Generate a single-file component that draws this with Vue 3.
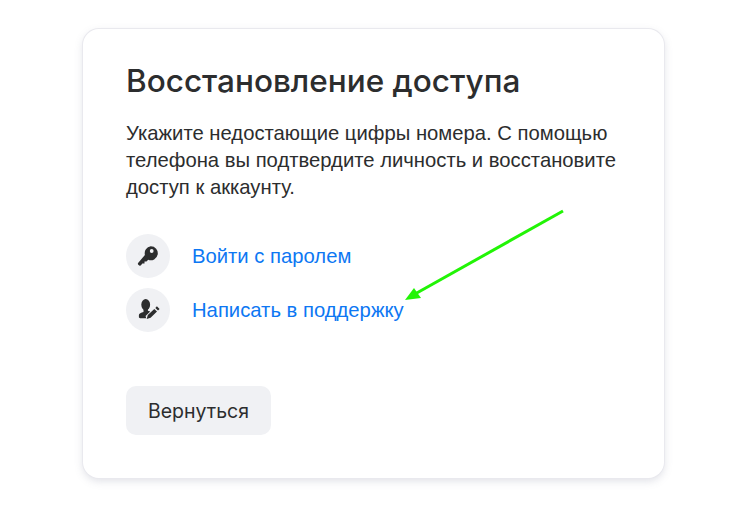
<template>
  <div class="page">
    <div class="card">
      <h1 class="title">Восстановление доступа</h1>
      <p class="text">
        Укажите недостающие цифры номера. С помощью<br>
        телефона вы подтвердите личность и восстановите<br>
        доступ к аккаунту.
      </p>
      <div class="options">
        <a class="option">
          <span class="icon">
            <svg width="24" height="24" viewBox="0 0 24 24">
              <path fill="#2c2d2e" fill-rule="evenodd" d="M14.700 2.300a7 7 0 1 1-2.500 13.500l-1.700 1.700h-2v2h-2.200l-1.300 1.800c-.4.500-1.100.600-1.700.2l-1-.8c-.5-.4-.6-1.100-.2-1.600l6.800-8.200a7 7 0 0 1 5.800-8.600zm1 2.800a1.900 1.900 0 1 0 0 3.800 1.900 1.900 0 0 0 0-3.800z"/>
            </svg>
          </span>
          <span class="link">Войти с паролем</span>
        </a>
        <a class="option">
          <span class="icon">
            <svg width="24" height="24" viewBox="0 0 24 24">
              <ellipse fill="#2c2d2e" cx="9.700" cy="6.800" rx="4.400" ry="5.700"/>
              <path fill="#2c2d2e" d="M7.500 11h4.400v1.800l2.300.7-4.600 4.600.6 2.200H4.200c-.8 0-1.300-.5-1.300-1.200v-2c0-1.600 2.300-2.500 4.600-3.100z"/>
              <path fill="#2c2d2e" d="M20.900 8.300l2.700 2.700-1.600 1.600-2.700-2.700zM18.300 10.900l2.700 2.700-6.400 6.200-3.900 1.100 1.100-3.800z"/>
            </svg>
          </span>
          <span class="link">Написать в поддержку</span>
        </a>
      </div>
      <button class="back">Вернуться</button>
    </div>
    <svg class="arrow" width="734" height="508" viewBox="0 0 734 508">
      <line x1="563" y1="211" x2="415" y2="294" stroke="#22f406" stroke-width="3"/>
      <polygon fill="#22f406" points="405,300 414,288 421,298"/>
    </svg>
  </div>
</template>

<script setup>
</script>

<style>
html, body {
  margin: 0;
  background: #fff;
}
</style>

<style scoped>
.page {
  position: relative;
  width: 734px;
  height: 508px;
  padding: 29px 0 0 83px;
  box-sizing: border-box;
  overflow: hidden;
  font-family: "Liberation Sans", Arial, sans-serif;
}

.card {
  width: 581px;
  height: 449px;
  box-sizing: border-box;
  padding: 34px 43px;
  background: #fff;
  border-radius: 16px;
  box-shadow: 0 0 0 1px #e9e9ee, 0 3px 8px rgba(110, 115, 140, 0.22);
}

.title {
  margin: 0;
  font-family: Inter, "Noto Sans", sans-serif;
  font-size: 31.5px;
  line-height: 36px;
  font-weight: 500;
  color: #2c2d2e;
}

.text {
  margin: 21px 0 0;
  font-size: 20.25px;
  line-height: 27px;
  color: #2c2d2e;
}

.options {
  margin-top: 33px;
  display: flex;
  flex-direction: column;
  gap: 10px;
}

.option {
  display: flex;
  align-items: center;
  gap: 22px;
}

.icon {
  width: 44px;
  height: 44px;
  border-radius: 50%;
  background: #f0f1f4;
  display: flex;
  align-items: center;
  justify-content: center;
}

.link {
  font-size: 20.25px;
  color: #0d77f3;
}

.back {
  display: block;
  margin-top: 54px;
  width: 145px;
  height: 49px;
  border: none;
  border-radius: 10px;
  background: #f0f1f4;
  font-family: Inter, "Noto Sans", sans-serif;
  font-size: 19.5px;
  color: #2c2d2e;
}

.arrow {
  position: absolute;
  left: 0;
  top: 0;
}
</style>
